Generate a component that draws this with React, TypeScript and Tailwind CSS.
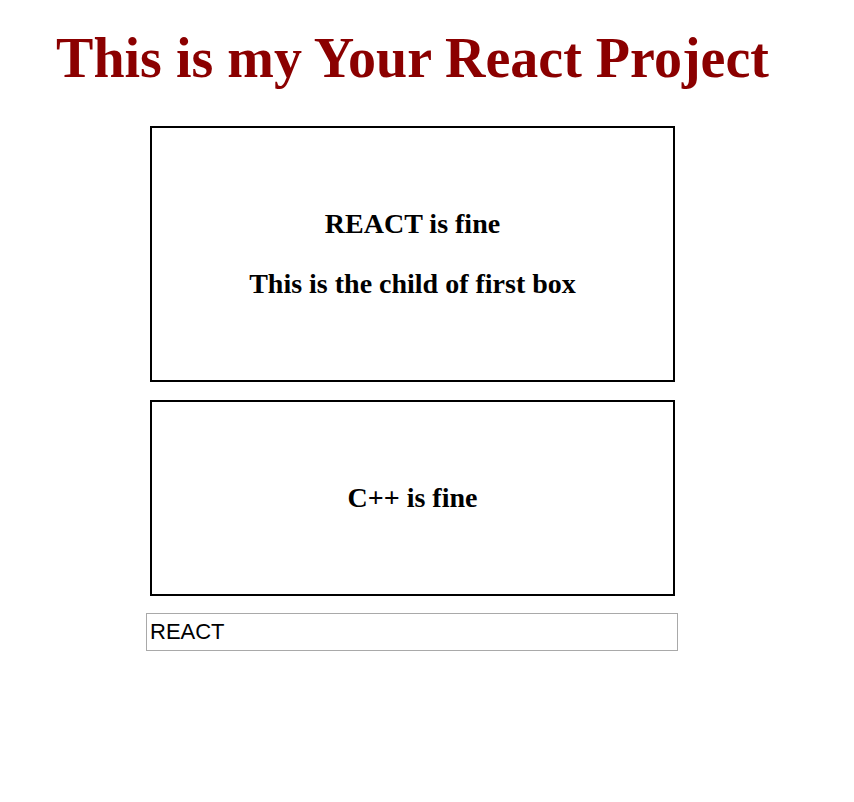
import React, { useState } from 'react';

const App: React.FC = () => {
  const [text, setText] = useState('REACT');

  return (
    <div className="w-[825px] min-h-[802px] bg-white flex flex-col">
      <h1 className="mt-[26px] self-center text-[56px] leading-[64px] font-bold text-[#8b0000] font-['Liberation_Serif',serif]">
        This is my Your React Project
      </h1>

      <div className="mt-[36px] ml-[150px] w-[525px] h-[256px] border-2 border-black flex flex-col items-center justify-center gap-[28px] font-['Liberation_Serif',serif]">
        <h2 className="text-[28px] leading-[32px] font-bold text-black">REACT is fine</h2>
        <h2 className="text-[28px] leading-[32px] font-bold text-black">This is the child of first box</h2>
      </div>

      <div className="mt-[18px] ml-[150px] w-[525px] h-[196px] border-2 border-black flex flex-col items-center justify-center font-['Liberation_Serif',serif]">
        <h2 className="text-[28px] leading-[32px] font-bold text-black">C++ is fine</h2>
      </div>

      <input
        value={text}
        onChange={e => setText(e.target.value)}
        className="mt-[17px] ml-[146px] w-[532px] h-[38px] border border-[#a9a9a9] px-[3px] text-[22px] text-black outline-none font-['Liberation_Sans',Arial,sans-serif]"
      />
    </div>
  );
};

export default App;
